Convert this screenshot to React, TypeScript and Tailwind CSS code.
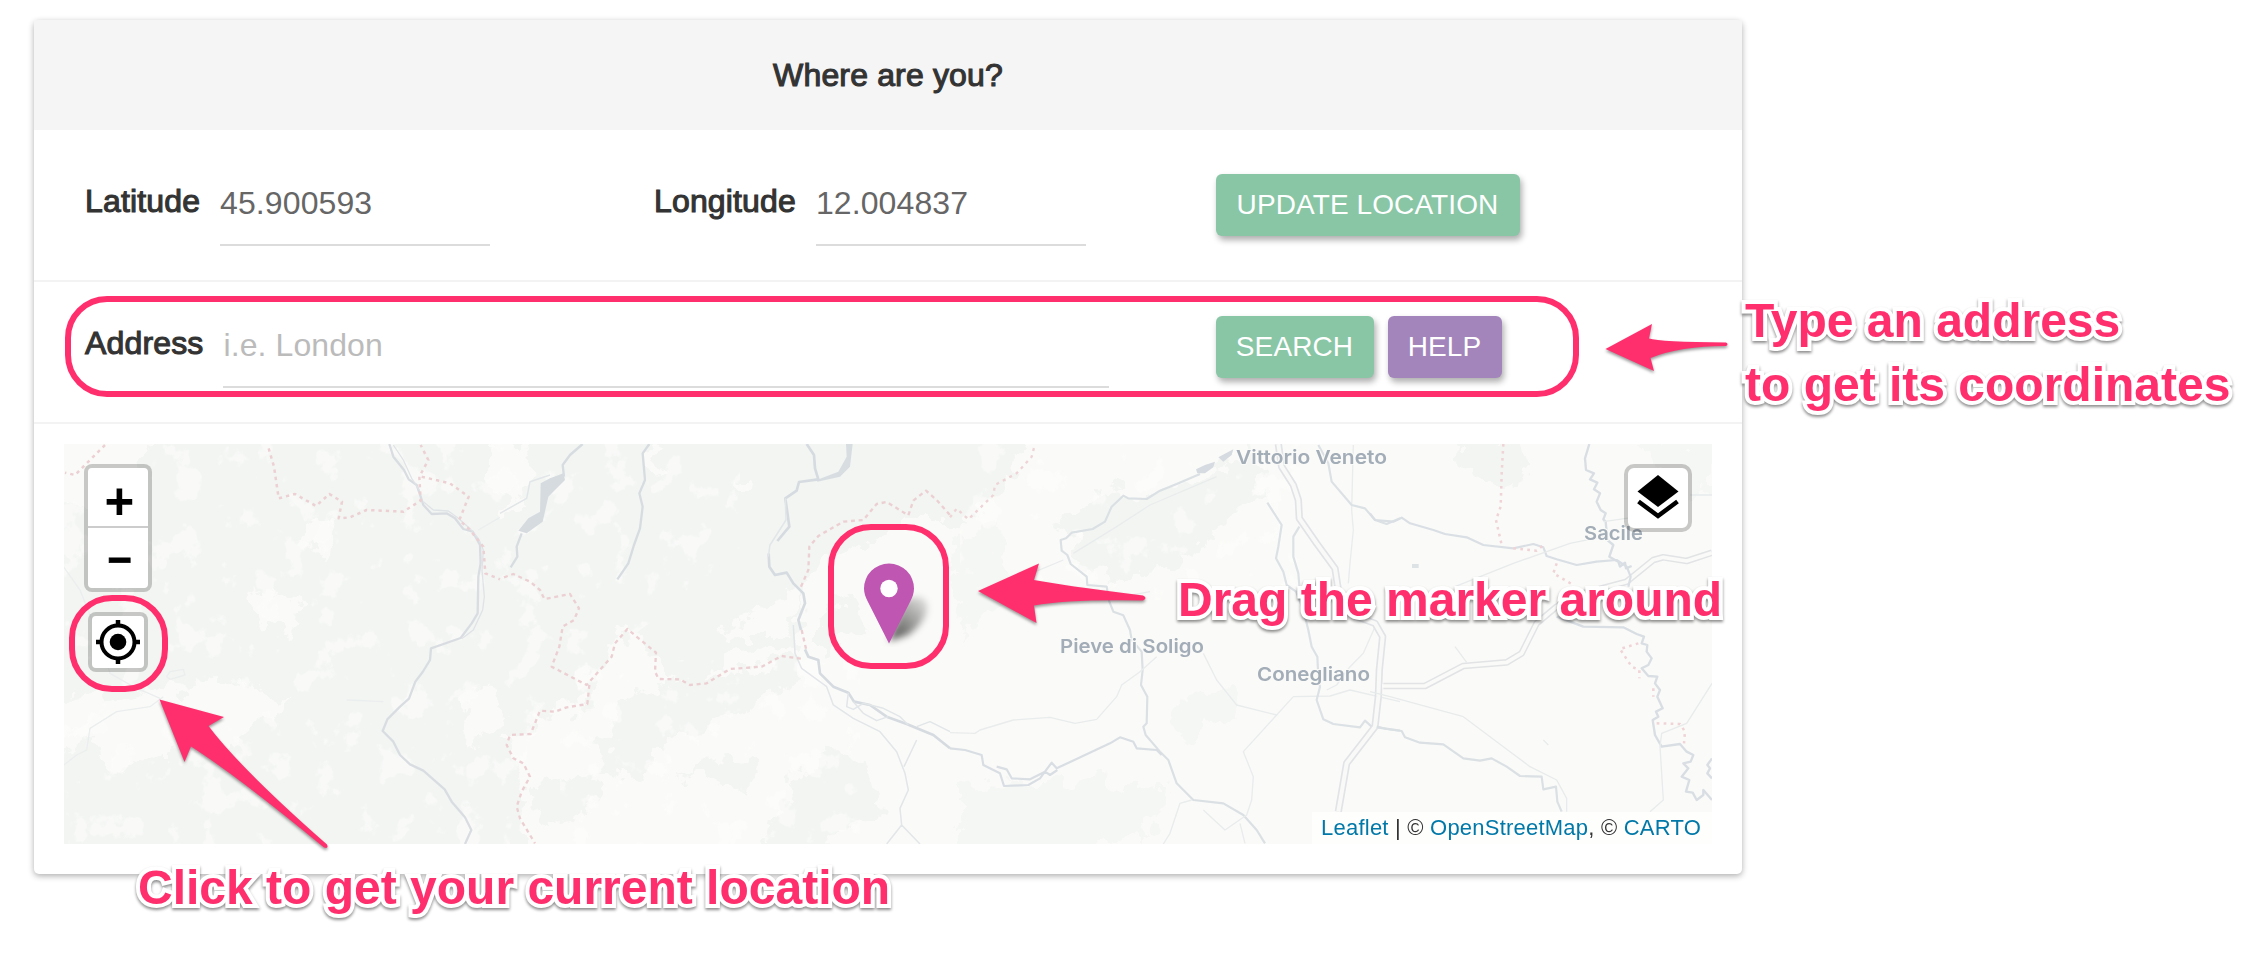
import type { ReactNode } from "react";

const PINK = "#ff2f6e";

function Field({ label, width, gap, children }: { label: string; width: string; gap: string; children: ReactNode }) {
  return (
    <div className="flex">
      <label className={`mt-[-1px] text-[32px] leading-[60px] tracking-[0.15px] text-[#333] [-webkit-text-stroke:1.1px_#333] ${gap}`}>{label}</label>
      <div className={`h-[74px] border-b-2 border-[#dcdcdc] text-[32px] leading-[63px] tracking-[0.1px] ${width}`}>{children}</div>
    </div>
  );
}

function Button({ className, children }: { className: string; children: ReactNode }) {
  return (
    <button
      className={`h-[62px] rounded-md pr-px text-center text-[28px] leading-[60px] tracking-[0.1px] whitespace-nowrap text-white shadow-[2px_4px_6px_rgba(0,0,0,0.32)] ${className}`}
    >
      {children}
    </button>
  );
}

function Note({ className, children }: { className: string; children: ReactNode }) {
  return (
    <div
      className={`absolute text-[48px] leading-[64px] font-bold whitespace-nowrap text-[#ff2f6e] [-webkit-text-stroke:8px_white] [paint-order:stroke_fill] [filter:drop-shadow(0_2px_1.5px_rgba(0,0,0,0.45))] ${className}`}
    >
      {children}
    </div>
  );
}

function Terrain() {
  return (
    <svg className="block h-full w-full" viewBox="64 444 1648 400">
      <defs>
        <filter id="ragged" x="-5%" y="-5%" width="110%" height="110%">
          <feTurbulence type="fractalNoise" baseFrequency="0.045" numOctaves="4" seed="4" result="n" />
          <feDisplacementMap in="SourceGraphic" in2="n" scale="40" xChannelSelector="R" yChannelSelector="G" />
          <feGaussianBlur stdDeviation="0.7" />
        </filter>
        <filter id="patchy" x="0" y="0" width="100%" height="100%">
          <feTurbulence type="fractalNoise" baseFrequency="0.035 0.032" numOctaves="4" seed="11" />
          <feColorMatrix values="0 0 0 0 0.98  0 0 0 0 0.98  0 0 0 0 0.973  0 14 0 0 -8.4" result="p" />
          <feComposite in="p" in2="SourceGraphic" operator="in" />
        </filter>
        <filter id="soft" x="-5%" y="-5%" width="110%" height="110%">
          <feGaussianBlur stdDeviation="0.5" />
        </filter>
      </defs>
      <rect x="64" y="444" width="1648" height="400" fill="#fafaf8" />

      {/* woodland */}
      <g filter="url(#ragged)" fill="#f2f5f2">
        <path d="M160 430H760L840 430H1030L1000 500L960 525L900 525L850 545L805 570L800 620L795 650L730 655L700 680L660 675L640 640L628 625L595 680L590 705L540 710L532 735L505 740L525 790L520 860H50V760L120 720L150 690L50 700V500L80 510L130 480Z" />
        <path d="M620 700L680 680L790 660L800 680L720 720L660 750L640 780L600 770Z" />
        <path d="M530 790L590 770L600 800L570 820L540 825Z" />
        <path d="M675 780L720 757L760 762L750 790L700 775Z" />
        <path d="M790 790L830 745L870 770L880 810L820 850L760 850Z" />
        <path d="M1060 520L1110 490L1150 500L1190 480L1250 450L1270 480L1230 520L1170 570L1100 580Z" />
        <path d="M820 620L845 590L860 630L820 655Z" />
        <path d="M1450 440H1520L1530 475L1500 490L1460 465Z" />
        <path d="M960 785L1100 780L1170 790L1150 830L1060 860H960Z" opacity=".7" />
        <path d="M1170 700L1230 690L1240 715L1180 740Z" opacity=".7" />
        <path d="M950 540L1000 525L1010 590L960 640Z" opacity=".7" />
        <path d="M1630 440H1712V500L1690 495Z" opacity=".7" />
      </g>
      <g filter="url(#ragged)" fill="#fafaf8">
        <path d="M298 515L335 520L325 555L302 545Z" />
        <path d="M255 590L300 600L295 640L250 615Z" />
        <path d="M90 700L230 680L290 700L240 740L180 750L130 770L100 760Z" />
        <path d="M470 690L500 680L505 730L460 740Z" />
        <path d="M725 625L800 590L790 640L740 640Z" />
        <path d="M735 475L750 475L748 490L736 490Z" />
        <path d="M490 440L530 445L525 500L505 515L490 480Z" />
        <path d="M640 450L670 455L650 475Z" />
      </g>
      <path d="M64 444H740V560L640 630L530 740L510 844H64Z" fill="#fff" filter="url(#patchy)" opacity=".6" />
      <path d="M560 660H860V844H560ZM960 444H1300V600H960Z" fill="#fff" filter="url(#patchy)" opacity=".6" />

      {/* west */}
      <g transform="translate(50 430) scale(.33333)" fill="none" strokeLinejoin="round" filter="url(#soft)">
        <path d="M1018 42L1030 80L1062 120L1076 148L1100 165L1112 200L1120 225L1145 252L1190 250L1215 265L1240 297L1268 305L1290 345L1292 400L1285 440L1283 550L1265 580L1232 624L1143 655L1140 690L1118 726L1096 755L1077 806L1050 830L1012 868L998 903L1030 935L1050 975L1080 1003L1120 1022L1184 1078L1205 1115L1245 1162L1264 1200L1245 1242" stroke="#d9dde2" strokeWidth="7" />
        <path d="M1030 45L1060 90L1085 145L1108 180M1120 215L1150 240L1195 243L1225 265L1262 298L1285 325L1300 360L1296 420L1303 500L1298 540L1270 600L1235 626" stroke="#e0e3e6" strokeWidth="4" />
        <path d="M42 412L90 480L130 580L180 730L250 770L330 805M42 1005L80 975L110 960L120 895L200 845L300 830L340 800M350 740L360 725L400 718L405 735L360 748ZM890 810L1000 815M1285 300L1350 262" stroke="#ebeeee" strokeWidth="4" />
        <path d="M165 45L120 90L75 135L45 128M656 55L672 110L686 205L735 192L798 228L838 192L876 215L866 265L900 262L950 240L1060 245L1112 212L1108 140L1135 90L1112 45M1115 140L1200 160L1256 200L1228 270L1260 300L1300 350L1306 430L1350 448" stroke="#ecd0d3" strokeWidth="7.500" strokeDasharray="10 12" />
      </g>

      {/* Piave valley */}
      <g transform="translate(500 430) scale(.33333)" fill="none" strokeLinejoin="round" filter="url(#soft)">
        <path d="M190 130L150 145L122 160L120 245L85 265L55 302L80 310L128 275L145 200L195 150Z" fill="#d6dbe0" />
        <path d="M1038 42L1040 80L1015 125L950 150L952 155L1020 140L1050 110L1058 42Z" fill="#d8dde2" />
        <path d="M248 42L210 75L188 105L192 140M65 310L50 350L52 380L32 412M448 42L428 70L435 150L418 190L428 230L420 295L402 345L385 400L352 448" stroke="#d7dce1" strokeWidth="7" />
        <path d="M920 42L942 75L945 115L955 148L897 156L890 182L856 205L868 290L832 333M806 370L808 410L825 435L860 428L880 460L910 490L915 520L895 570L903 600M915 658L925 680L955 690L960 730L1000 770L1045 788L1062 815L1110 825L1160 860L1220 882L1300 915L1350 955" stroke="#d5dbe0" strokeWidth="8" />
        <path d="M856 205L858 270L810 345L805 380M1045 788L1040 830L1060 838L1090 820L1150 835L1200 860L1225 885M1060 815L1090 850L1130 872L1165 860M1250 890L1290 875L1350 905M880 585L885 670L905 715L980 770L1000 825L1060 865L1140 905L1190 965L1215 1030L1225 1080L1200 1135L1205 1185L1160 1242M1205 1185L1260 1242M1250 930L1212 1010M0 250L80 205L90 155L150 135" stroke="#e2e6e8" strokeWidth="4.500" />
        <path d="M12 442L40 432L90 455L120 480L133 507L210 492L237 535L222 570L188 590L178 650L155 710L260 765L335 680L345 640L382 597L468 668L465 725L476 747L540 748L570 765L620 760L690 717L785 710L845 678L903 686M268 765L262 822L200 832L165 845L120 842L92 912L30 915L20 945L40 985L70 1000L90 1040L65 1085L50 1130L60 1165L105 1240M903 470L925 420L928 350L955 318L1030 275L1090 270L1130 222L1160 216L1225 256L1240 212L1278 182L1310 210L1350 255M905 600L920 665" stroke="#eccfd2" strokeWidth="7" strokeDasharray="12 11" />
      </g>

      {/* centre */}
      <g transform="translate(950 430) scale(.33333)" fill="none" strokeLinejoin="round" filter="url(#soft)">
        <path d="M738 118L765 105L795 95L790 112L765 130L742 130ZM805 82L850 58L845 75L820 95Z" fill="#d5dbe0" />
        <path d="M750 132L680 162L630 182L590 207L535 205L520 197L485 230L465 275L428 297L365 308L348 325L332 330L335 362L352 375L362 402L410 440L412 465L470 470L478 515L490 545L520 556L540 600L545 630L575 665L578 720L573 765L592 800L590 880L580 890L587 915L630 965L655 990L680 1060L730 1110L820 1120L880 1155L920 1200L945 1240" stroke="#dae0e4" strokeWidth="6.500" />
        <path d="M0 955L45 960L95 975L100 1005L150 1030L162 1068L235 1065L270 1045L305 998L320 1015L480 940L510 922L550 935L560 955L620 960L635 975M140 1010L170 1018L185 1045L240 1048L285 1025L300 1035L322 1020" stroke="#d8dee3" strokeWidth="6.500" />
        <path d="M0 908L75 910L90 900L190 870L300 862L375 880L440 868L500 800L515 765L570 725L620 680M760 670L800 750L860 825L980 855M1350 815L1200 780L1140 798L1030 800L980 855L880 965L910 1040L905 1110L890 1155L825 1200L760 1140M725 1110L690 1120L660 1210L640 1242M870 1180L885 1240M340 390L220 440M520 500L600 485M1210 45L1205 240L1210 300L1200 400L1195 460M1275 590L1240 670L1200 710L1160 765L1130 780M370 370L500 290L600 225L800 140" stroke="#e9ecec" strokeWidth="4" />
        <path d="M952 218L995 285L985 350L978 385L1000 425L1010 465L1038 485L1060 540L1075 600L1085 650L1102 680L1105 740L1110 770L1100 810L1120 868L1150 882L1230 892L1245 872L1265 890L1350 902M1048 290L1030 320L1030 380L1045 430L1050 490M1105 45L1135 100L1145 155L1205 225L1245 235L1275 270L1310 282L1350 265" stroke="#dbe1e5" strokeWidth="6.500" />
        <path d="M985 42L995 110L1030 165L1045 210L1048 265L1100 340L1155 415L1165 480L1220 560L1275 580L1298 620L1288 720L1285 800L1275 890L1190 1000L1165 1145" stroke="#e1e3e6" strokeWidth="22" />
        <path d="M985 42L995 110L1030 165L1045 210L1048 265L1100 340L1155 415L1165 480L1220 560L1275 580L1298 620L1288 720L1285 800L1275 890L1190 1000L1165 1145" stroke="#f9f9f8" strokeWidth="12" />
        <path d="M0 262L20 236L55 268L130 195L135 165L200 130L245 80L255 42" stroke="#eed4d7" strokeWidth="7" strokeDasharray="9 13" />
      </g>

      {/* east */}
      <g transform="translate(1370 430) scale(.33333)" fill="none" strokeLinejoin="round" filter="url(#soft)">
        <path d="M40 768H165L280 708L410 697L455 670L500 580L560 530L640 490L770 455L850 390L880 382L950 393L1026 368" stroke="#e1e3e5" strokeWidth="20" />
        <path d="M36 768H165L280 708L410 697L455 670L500 580L560 530L640 490L770 455L850 390L880 382L950 393L1026 368" stroke="#fafaf8" strokeWidth="11" />
        <path d="M0 250L15 270L70 275L95 263L120 280L190 300L225 312L290 322L340 345L430 355L490 342L520 352L530 378L560 388L620 405L680 395L740 390L770 410L782 440L775 470" stroke="#d9dfe4" strokeWidth="6.500" />
        <path d="M658 42L645 85L648 120L672 130L660 148L682 158L672 178L690 190L680 215L692 240L707 250L700 268L707 275L712 330L730 345L718 380L745 395L750 410L765 398L768 415L785 408" stroke="#d8dee3" strokeWidth="7" />
        <path d="M560 560L640 590L760 592L800 612L822 620L815 640L832 645L830 665L845 685L835 705L815 715L835 738L862 740L855 760L870 780L862 800L878 835L858 845L865 860L848 870L855 915L875 950L930 942L950 965L970 975L962 995L940 1000L955 1015L935 1040L958 1050L948 1085L968 1088L980 1110L1000 1095L1000 1080L1026 1110M1026 985L1012 1005L1020 1015L1012 1030L1026 1045" stroke="#d8dee3" strokeWidth="7" />
        <path d="M20 890L50 897L95 903L105 922L150 938L220 943L280 985L330 992L365 985L410 1010L450 1038L515 1040L520 1078L558 1070L562 1115L575 1145" stroke="#dae0e4" strokeWidth="6.500" />
        <path d="M0 785L60 800L280 860L400 950L480 1010L560 1050L590 1105L590 1145M255 470L430 400L600 340L700 320M1026 760L950 880L875 910L870 950L880 1110L840 1145M700 275L790 262M960 195H1026M255 650L290 697M520 930L535 945" stroke="#e8ebeb" strokeWidth="4" />
        <path d="M400 42L395 130L392 230L378 270L395 345M430 355L500 362L520 345M560 400L550 430L610 465M805 640L750 657L785 710L808 720V745M850 775V800M860 880L930 882L945 905L942 940" stroke="#efd3d6" strokeWidth="7.500" strokeDasharray="8 13" />
        <rect x="126" y="402" width="20" height="12" fill="#dde2e5" />
      </g>

      <g fontFamily="Inter, 'Noto Sans', sans-serif" fontWeight="600" fontSize="19" fill="#a3adb8" stroke="#fafaf8" strokeWidth="2" paintOrder="stroke">
        <text x="1236" y="464" textLength="151" lengthAdjust="spacingAndGlyphs">Vittorio Veneto</text>
        <text x="1060" y="653" textLength="144" lengthAdjust="spacingAndGlyphs">Pieve di Soligo</text>
        <text x="1257" y="681" textLength="113" lengthAdjust="spacingAndGlyphs">Conegliano</text>
        <text x="1584" y="539.500" textLength="59" lengthAdjust="spacingAndGlyphs">Sacile</text>
      </g>
    </svg>
  );
}

function Pin() {
  return (
    <svg className="absolute top-[119px] left-[796px]" width="84" height="84" viewBox="860 563 84 84">
      <defs>
        <filter id="pinShadow" x="-50%" y="-50%" width="200%" height="200%">
          <feGaussianBlur stdDeviation="3.500" />
        </filter>
        <linearGradient id="pinFade" x1="0" y1="1" x2="0.7" y2="0">
          <stop offset="0" stopColor="#000" stopOpacity=".7" />
          <stop offset="1" stopColor="#000" stopOpacity=".15" />
        </linearGradient>
      </defs>
      <path d="M889 641L904 600Q924 592 927 605Q928 620 908 635Z" fill="url(#pinFade)" filter="url(#pinShadow)" />
      <path d="M889 563.500A25 25 0 0 0 864 588.500C864 593 865.500 597 867.500 601L889 643.500L910.500 601C912.500 597 914 593 914 588.500A25 25 0 0 0 889 563.500Z" fill="#bf56b1" />
      <circle cx="889" cy="588.500" r="8.700" fill="#fff" />
    </svg>
  );
}

function Arrows() {
  return (
    <svg
      className="pointer-events-none absolute inset-0 [filter:drop-shadow(0_2px_1.5px_rgba(0,0,0,0.4))]"
      width="2252"
      height="970"
      viewBox="0 0 2252 970"
      fill={PINK}
    >
      <path d="M1605.500 349L1652 324L1649 338.500Q1660 342 1726 342.500Q1729 344 1726 346Q1680 346 1650.500 358L1654 371Z" />
      <path d="M978 591L1039 563.500L1034 580Q1060 585 1143 595.500Q1148 598 1143 600.500Q1070 599 1034 605.500L1036.500 623Z" />
      <path d="M159.500 699.500L224 717L208.500 726Q240 768 327 844.500Q329 849 324 847.500Q240 778 191 746.500L184.500 762Z" />
    </svg>
  );
}

export default function App() {
  return (
    <div className="relative h-[970px] w-[2252px] overflow-hidden bg-white pt-5 pl-[34px] font-['Liberation_Sans',Arial,sans-serif]">
      <section className="flex h-[854px] w-[1708px] flex-col rounded-[5px] bg-white shadow-[0_2px_6px_rgba(0,0,0,0.32)]">
        <h1 className="h-[110px] bg-[#f5f5f5] text-center text-[32px] leading-[110px] font-normal tracking-[0.15px] text-[#333] [-webkit-text-stroke:1.1px_#333]">
          Where are you?
        </h1>

        <div className="flex h-[152px] border-b-2 border-[#f3f3f3] pt-[42px] pl-[51px]">
          <div className="w-[569px]">
            <Field label="Latitude" gap="mr-5" width="w-[270px] text-[#666]">45.900593</Field>
          </div>
          <div className="w-[562px]">
            <Field label="Longitude" gap="mr-5" width="w-[270px] text-[#666]">12.004837</Field>
          </div>
          <Button className="mt-0.5 w-[304px] bg-[#88c6a5]">UPDATE LOCATION</Button>
        </div>

        <div className="flex h-[142px] border-b-2 border-[#f3f3f3] pt-8 pl-[51px]">
          <div className="w-[1131px]">
            <Field label="Address" gap="mr-5" width="w-[886px] text-[#bbb]">i.e. London</Field>
          </div>
          <div className="mt-0.5 flex gap-3.5">
            <Button className="w-[158px] bg-[#88c6a5]">SEARCH</Button>
            <Button className="w-[114px] bg-[#a385bb]">HELP</Button>
          </div>
        </div>

        <div className="relative mt-5 ml-[30px] h-[400px] w-[1648px] overflow-hidden">
          <Terrain />

          <div className="absolute top-5 left-5 flex w-[68px] flex-col rounded-lg border-4 border-black/20 bg-white bg-clip-padding text-black">
            <button className="h-[60px] border-b-2 border-[#ccc] pl-[3px] text-center text-[51px] leading-[67px] font-bold">+</button>
            <button className="h-[60px] pl-[3px] text-center text-[42px] leading-[63px] font-bold [-webkit-text-stroke:0.7px_#000]">−</button>
          </div>

          <button className="absolute top-[168px] left-6 flex h-[60px] w-[60px] items-center justify-center rounded-lg border-4 border-black/20 bg-white bg-clip-padding">
            <svg width="48" height="48" viewBox="-24 -24 48 48" fill="none" stroke="#000">
              <circle r="16.500" strokeWidth="4" />
              <circle r="8.300" fill="#000" stroke="none" />
              <path d="M0 -22V-15M0 22V15M-22 0H-15M22 0H15" strokeWidth="4.500" />
            </svg>
          </button>

          <button className="absolute top-5 right-5 flex h-[68px] w-[68px] items-center justify-center rounded-[10px] border-4 border-black/20 bg-white bg-clip-padding">
            <svg width="52" height="52" viewBox="0 0 52 52">
              <path d="M26 3L46.500 19.500L26 35L5.500 19.500Z" fill="#000" />
              <path d="M6.500 29.500L26 44L45.500 29.500" fill="none" stroke="#000" strokeWidth="4.500" />
            </svg>
          </button>

          <Pin />

          <p className="absolute right-0 bottom-0 h-8 w-[400px] bg-white/75 pr-[11px] text-right text-[22px] leading-[32px] tracking-[0.22px] whitespace-nowrap text-[#333]">
            <a className="text-[#0078a8]">Leaflet</a> | © <a className="text-[#0078a8]">OpenStreetMap</a>, ©{" "}
            <a className="text-[#0078a8]">CARTO</a>
          </p>
        </div>
      </section>

      <div className="absolute top-[296px] left-[65px] h-[101px] w-[1514px] rounded-[42px] border-6 border-[#ff2f6e]" />
      <div className="absolute top-[595px] left-[69px] h-[97px] w-[99px] rounded-[43px] border-6 border-[#ff2f6e]" />
      <div className="absolute top-[524px] left-[828px] h-[145px] w-[121px] rounded-[43px] border-6 border-[#ff2f6e]" />
      <Arrows />

      <Note className="top-[289px] left-[1745px]">
        Type an address
        <br />
        to get its coordinates
      </Note>
      <Note className="top-[568px] left-[1178px]">Drag the marker around</Note>
      <Note className="top-[856px] left-[138px]">Click to get your current location</Note>
    </div>
  );
}
